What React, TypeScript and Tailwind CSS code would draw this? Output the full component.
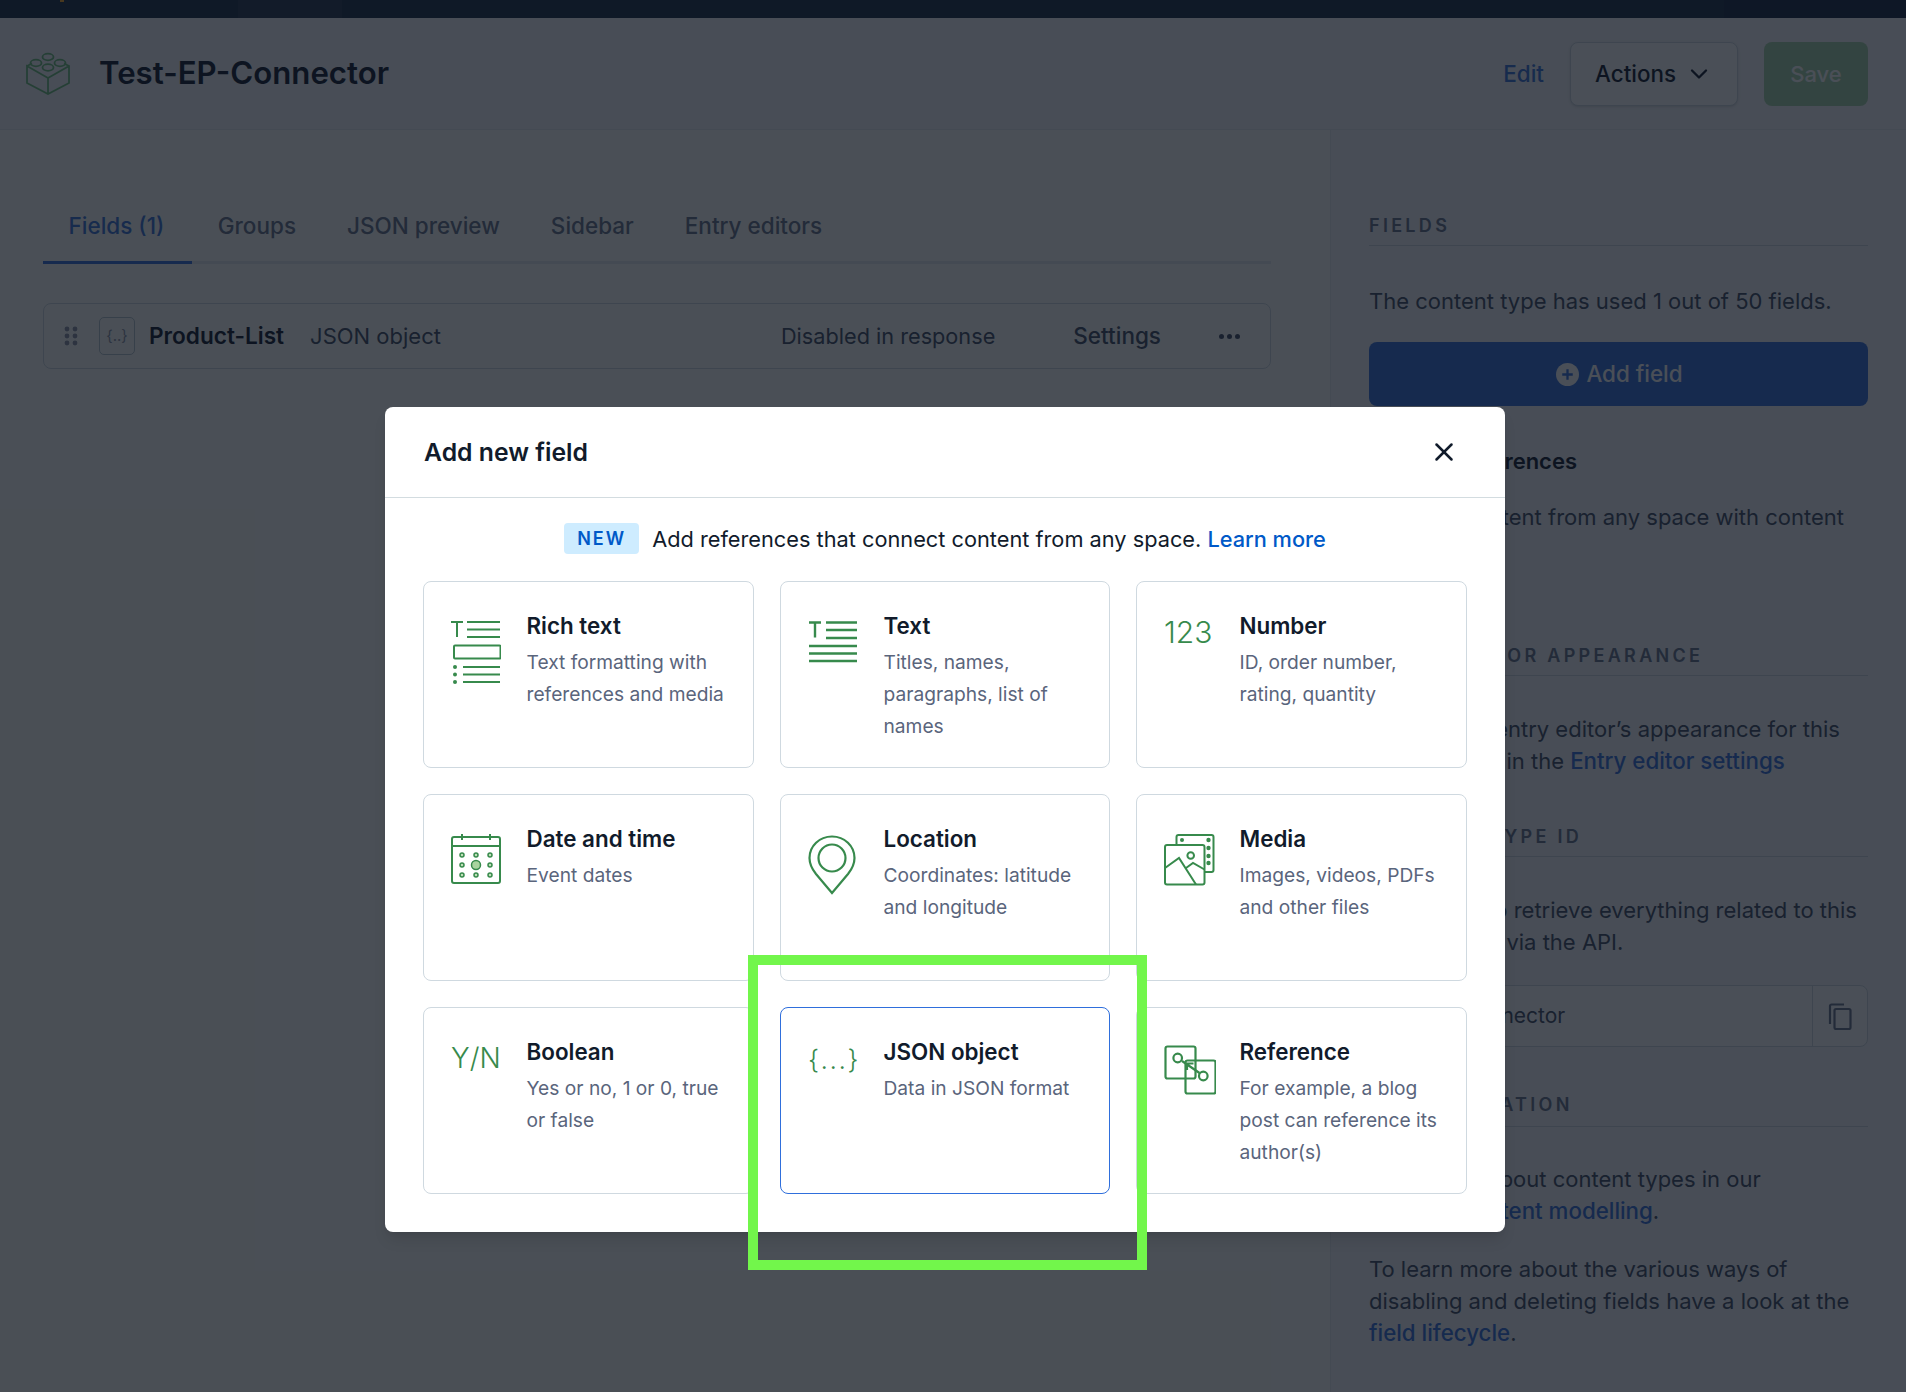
import { ChevronDown, X } from 'lucide-react';
import type { ReactNode } from 'react';

const GREEN = '#378a4c';

// Iconos de los tipos de campo
const RichTextIcon = () => (
  <svg width="50" height="64" viewBox="0 0 50 64" fill="none" stroke={GREEN} strokeWidth="2">
    <path d="M0 2h12M6 2v15M16 2h33M16 9.500h33M16 17h33" />
    <rect x="3" y="25.500" width="46.500" height="13" rx="1" />
    <path d="M12 47h37M12 54.500h37M12 62h37" />
    <circle cx="4" cy="47" r="2" fill={GREEN} stroke="none" />
    <circle cx="4" cy="54.500" r="2" fill={GREEN} stroke="none" />
    <circle cx="4" cy="62" r="2" fill={GREEN} stroke="none" />
  </svg>
);

const TextIcon = () => (
  <svg width="49" height="44" viewBox="0 0 49 44" fill="none" stroke={GREEN} strokeWidth="2.400">
    <path d="M1 2.500h12M7 2.500v15M18 2.500h31M18 10h31M18 18h31M1 26h48M1 33.500h48M1 41h48" />
  </svg>
);

const CalendarIcon = () => (
  <svg width="52" height="52" viewBox="0 0 52 52" fill="none" stroke={GREEN} strokeWidth="2" className="-ml-[1px]">
    <rect x="2" y="3" width="48" height="46" rx="2" />
    <path d="M2 12h48M12 0v6M40 0v6" />
    {[21, 31, 41].map((y) =>
      [12, 26, 40].map((x) =>
        x === 26 && y === 31 ? null : <circle key={`${x}-${y}`} cx={x} cy={y} r="2" fill="#bfe0b8" strokeWidth="1.500" />,
      ),
    )}
    <circle cx="26" cy="31" r="4.500" fill="#a9d49f" strokeWidth="1.500" />
  </svg>
);

const LocationIcon = () => (
  <svg width="48" height="60" viewBox="0 0 48 60" fill="none" stroke={GREEN} strokeWidth="2.200">
    <path d="M24 58 8 39C4 34 1.500 29 1.500 23 1.500 11 11.500 1.500 24 1.500S46.500 11 46.500 23C46.500 29 44 34 40 39Z" />
    <circle cx="24" cy="23" r="13.500" />
  </svg>
);

const MediaIcon = () => (
  <svg width="51" height="52" viewBox="0 0 51 52" fill="none" stroke={GREEN} strokeWidth="2">
    <rect x="12.500" y="1" width="37" height="37" rx="2" />
    <rect x="1" y="11" width="39.500" height="39.500" rx="2" fill="#fff" />
    <circle cx="18" cy="6" r="2" fill={GREEN} stroke="none" />
    {[6, 14, 22, 29].map((y) => (
      <circle key={y} cx="44.500" cy={y} r="2.200" fill={GREEN} stroke="none" />
    ))}
    <circle cx="26.700" cy="21.500" r="3.300" />
    <path d="M1 34 15 24 32 50.500M22 34l7-5 11.500 6.500" />
  </svg>
);

const ReferenceIcon = () => (
  <svg width="52" height="50" viewBox="0 0 52 50" fill="none" stroke={GREEN} strokeWidth="2.200">
    <rect x="1.500" y="1.500" width="30" height="32" rx="2" />
    <rect x="21.500" y="15.500" width="30" height="33" rx="2" />
    <circle cx="13.700" cy="13" r="4.300" />
    <circle cx="39.300" cy="31" r="4.300" />
    <path d="M18 16l17.500 12M23 25v-6.500h6.500" />
  </svg>
);

const LegoIcon = () => (
  <svg width="44" height="43" viewBox="0 0 44 43" fill="none" stroke="#6fc07c" strokeWidth="1.800" className="shrink-0">
    <path d="M1 14 6 11.500M38 11.500 43 14 22 26 1 14V31L22 42 43 31V14M22 26V42" />
    <ellipse cx="22" cy="5" rx="5.500" ry="3.300" />
    <ellipse cx="10" cy="11" rx="5.500" ry="3.300" />
    <ellipse cx="34" cy="11" rx="5.500" ry="3.300" />
    <ellipse cx="22" cy="15.500" rx="5.500" ry="3.300" />
  </svg>
);

const DragDots = () => (
  <svg width="14" height="20" viewBox="0 0 14 20" fill="#8c93a5" className="shrink-0">
    {[3, 10, 17].map((y) => (
      <g key={y}>
        <circle cx="3" cy={y} r="2.400" />
        <circle cx="11" cy={y} r="2.400" />
      </g>
    ))}
  </svg>
);

const CopyIcon = () => (
  <svg width="26" height="27" viewBox="0 0 26 27" fill="none" stroke="#67728a" strokeWidth="2.200">
    <path d="M3 21V3a1.500 1.500 0 0 1 1.500-1.500H17" />
    <rect x="7.500" y="6" width="16" height="20" rx="1.500" />
  </svg>
);

const PlusCircle = () => (
  <svg width="23" height="23" viewBox="0 0 24 24" className="shrink-0">
    <circle cx="12" cy="12" r="12" fill="#fff" />
    <path d="M12 6.500v11M6.500 12h11" stroke="#3470dc" strokeWidth="2.400" />
  </svg>
);

interface FieldType {
  name: string;
  description: string;
  icon: ReactNode;
  iconOffset: string;
  active?: boolean;
}

const fieldTypes: FieldType[] = [
  { name: 'Rich text', description: 'Text formatting with references and media', icon: <RichTextIcon />, iconOffset: 'mt-[10px]' },
  { name: 'Text', description: 'Titles, names, paragraphs, list of names', icon: <TextIcon />, iconOffset: 'mt-[10px]' },
  {
    name: 'Number',
    description: 'ID, order number, rating, quantity',
    icon: <span className="block text-[30px] leading-[36px] font-light text-[#378a4c]">123</span>,
    iconOffset: 'mt-[4px]',
  },
  { name: 'Date and time', description: 'Event dates', icon: <CalendarIcon />, iconOffset: 'mt-[11px]' },
  { name: 'Location', description: 'Coordinates: latitude and longitude', icon: <LocationIcon />, iconOffset: 'mt-[12px]' },
  { name: 'Media', description: 'Images, videos, PDFs and other files', icon: <MediaIcon />, iconOffset: 'mt-[11px]' },
  {
    name: 'Boolean',
    description: 'Yes or no, 1 or 0, true or false',
    icon: <span className="block text-[28px] leading-[36px] font-light text-[#378a4c]">Y/N</span>,
    iconOffset: 'mt-[4px]',
  },
  {
    name: 'JSON object',
    description: 'Data in JSON format',
    icon: <span className="block text-[26.500px] leading-[36px] font-light tracking-[1.500px] text-[#378a4c]">{'{...}'}</span>,
    iconOffset: 'mt-[5px]',
    active: true,
  },
  { name: 'Reference', description: 'For example, a blog post can reference its author(s)', icon: <ReferenceIcon />, iconOffset: 'mt-[9px]' },
];

const tabs = ['Fields (1)', 'Groups', 'JSON preview', 'Sidebar', 'Entry editors'];

const SectionTitle = ({ children, className = '' }: { children: string; className?: string }) => (
  <h2 className={`border-b border-[#cfd9e0] pb-2 text-[18px] leading-[22px] font-semibold tracking-[3.300px] text-[#67728a] ${className}`}>
    {children}
  </h2>
);

const SideLink = ({ children, className = '' }: { children: string; className?: string }) => (
  <a className={`text-[22.300px] font-medium text-[#3470dc] ${className}`}>{children}</a>
);

const FieldCard = ({ field }: { field: FieldType }) => (
  <button
    className={`flex items-start rounded-[8px] border bg-white pt-[28px] pl-[27px] text-left ${
      field.active ? 'border-[#2f6fdc]' : 'border-[#cfd9e0]'
    }`}
  >
    <div className={`w-[75.500px] shrink-0 ${field.iconOffset}`}>{field.icon}</div>
    <div className="pr-[24px]">
      <div className="text-[22.400px] leading-[32px] font-semibold text-[#111b2b]">{field.name}</div>
      <div className="mt-[4px] text-[19.200px] leading-[32px] text-[#5a657c]">{field.description}</div>
    </div>
  </button>
);

export default function App() {
  return (
    <div className="relative flex h-[1392px] w-[1906px] flex-col overflow-hidden bg-white font-[Inter,sans-serif] text-[22px] leading-[32px] text-[#414d63]">
      {/* Barra superior */}
      <div className="flex h-[18px] shrink-0 bg-[#1b2b45]">
        <div className="ml-[60px] h-[2px] w-[4px] bg-[#f6a623]" />
        <div className="ml-[174px] w-[104px] bg-[#23334c]" />
        <div className="ml-auto w-[182px] bg-[#152540]" />
      </div>

      {/* Cabecera */}
      <header className="flex h-[112px] shrink-0 items-center justify-between border-b border-[#e7ebee] bg-[#f5f6f9] pr-[38px] pl-[26px]">
        <div className="flex items-center gap-[29px]">
          <LegoIcon />
          <h1 className="mb-[2px] text-[31.200px] leading-[44px] font-semibold text-[#111b2b]">Test-EP-Connector</h1>
        </div>
        <div className="flex items-center">
          <a className="mr-[26px] text-[22.500px] font-medium text-[#3a74d8]">Edit</a>
          <button className="mr-[26px] flex h-[64px] w-[168px] items-center justify-center gap-[9px] rounded-[8px] border border-[#cfd9e0] bg-white text-[22.400px] font-medium text-[#111b2b] shadow-sm">
            Actions
            <ChevronDown size={28} strokeWidth={2} />
          </button>
          <button className="h-[64px] w-[104px] rounded-[8px] bg-[#a6d3a8] font-medium text-white">Save</button>
        </div>
      </header>

      <div className="flex min-h-0 flex-1">
        {/* Contenido principal */}
        <main className="w-[1330px] shrink-0 bg-[#fffffa] pt-[62px] pr-[59px] pl-[43px]">
          <nav className="flex h-[72px] border-b-[3px] border-[#e7ebee]">
            {tabs.map((tab, i) => (
              <div
                key={tab}
                className={`-mb-[3px] flex items-center border-b-[3px] px-[25.500px] pb-[2px] text-[22.500px] font-medium ${
                  i === 0 ? 'border-[#3470dc] !pr-[28px] text-[#3a74d8]' : 'border-transparent text-[#67728a]'
                }`}
              >
                {tab}
              </div>
            ))}
          </nav>

          <div className="mt-[39px] flex h-[66px] items-center rounded-[8px] border border-[#cfd9e0] pl-[20px]">
            <DragDots />
            <div className="ml-[21px] flex h-[38px] w-[36px] items-center justify-center rounded-[5px] border border-[#b4c3ca] text-[15px] text-[#8c93a5]">
              {'{..}'}
            </div>
            <span className="ml-[14px] text-[22.600px] font-semibold text-[#111b2b]">Product-List</span>
            <span className="ml-[26px]">JSON object</span>
            <span className="ml-auto text-[21.700px]">Disabled in response</span>
            <span className="ml-[78px] text-[22.500px] font-medium">Settings</span>
            <span className="mr-[30px] ml-[58px] flex gap-[3px]">
              <i className="h-[5px] w-[5px] rounded-full bg-[#414d63]" />
              <i className="h-[5px] w-[5px] rounded-full bg-[#414d63]" />
              <i className="h-[5px] w-[5px] rounded-full bg-[#414d63]" />
            </span>
          </div>
        </main>

        {/* Barra lateral */}
        <aside className="flex-1 border-l border-[#e7ebee] bg-[#f5f6f9] pt-[85px] pr-[38px] pl-[38px]">
          <SectionTitle>FIELDS</SectionTitle>
          <p className="mt-[39px]">The content type has used 1 out of 50 fields.</p>
          <button className="mt-[25px] flex h-[64px] w-full items-center justify-center gap-[7px] rounded-[8px] bg-[#3470dc] pl-[2px] text-[22.400px] font-medium text-white">
            <PlusCircle />
            Add field
          </button>
          <h3 className="mt-[39px] font-semibold text-[#111b2b]">External references</h3>
          <p className="mt-[24px]">Connect content from any space with content model.</p>

          <SectionTitle className="mt-[80px]">ENTRY EDITOR APPEARANCE</SectionTitle>
          <p className="mt-[37px]">
            Change the entry editor’s appearance for this content type in the <SideLink>Entry editor settings</SideLink>
          </p>

          <SectionTitle className="mt-[49px]">CONTENT TYPE ID</SectionTitle>
          <p className="mt-[37px]">Use this ID to retrieve everything related to this content type via the API.</p>
          <div className="mt-[27px] flex h-[62px] items-center rounded-[8px] border border-[#cfd9e0] bg-white">
            <span className="flex-1 pl-[5px] text-[21px]">Test-EP-Connector</span>
            <div className="flex h-full w-[55px] items-center justify-center border-l border-[#cfd9e0]">
              <CopyIcon />
            </div>
          </div>

          <SectionTitle className="mt-[47px] !pb-[10px]">DOCUMENTATION</SectionTitle>
          <p className="mt-[36px]">
            Read more about content types in our <SideLink className="inline-block">guide to content modelling</SideLink>.
          </p>
          <p className="mt-[26px]">
            To learn more about the various ways of disabling and deleting fields have a look at the <SideLink>field lifecycle</SideLink>.
          </p>
        </aside>
      </div>

      {/* Fondo oscuro del modal */}
      <div className="absolute inset-0 bg-[rgba(12,19,29,0.745)]" />

      {/* Modal */}
      <div className="absolute top-[407px] left-[385px] flex h-[825px] w-[1120px] flex-col rounded-[8px] bg-white shadow-lg">
        <div className="flex h-[91px] shrink-0 items-center justify-between border-b border-[#d3dce0] pr-[46px] pl-[39px]">
          <h2 className="text-[24.750px] leading-[32px] font-semibold text-[#111b2b]">Add new field</h2>
          <X size={30} strokeWidth={2} className="text-[#111b2b]" />
        </div>
        <div className="flex h-[83px] shrink-0 items-center justify-center gap-[13px] pb-[2px] text-[21.750px] text-[#111b2b]">
          <span className="flex h-[31px] w-[75px] items-center justify-center rounded-[4px] bg-[#ceecff] text-[18px] font-semibold tracking-[2px] text-[#0059c8]">
            NEW
          </span>
          <span>
            Add references that connect content from any space. <a className="font-medium text-[#0059c8]">Learn more</a>
          </span>
        </div>
        <div className="grid auto-rows-[186.500px] grid-cols-[331px_330px_331px] gap-x-[26px] gap-y-[26.500px] px-[38px]">
          {fieldTypes.map((field) => (
            <FieldCard key={field.name} field={field} />
          ))}
        </div>
      </div>

      {/* Recuadro verde de anotación */}
      <div className="absolute top-[955px] left-[748px] h-[315px] w-[399px] border-[10px] border-[#72f64b]" />
    </div>
  );
}
